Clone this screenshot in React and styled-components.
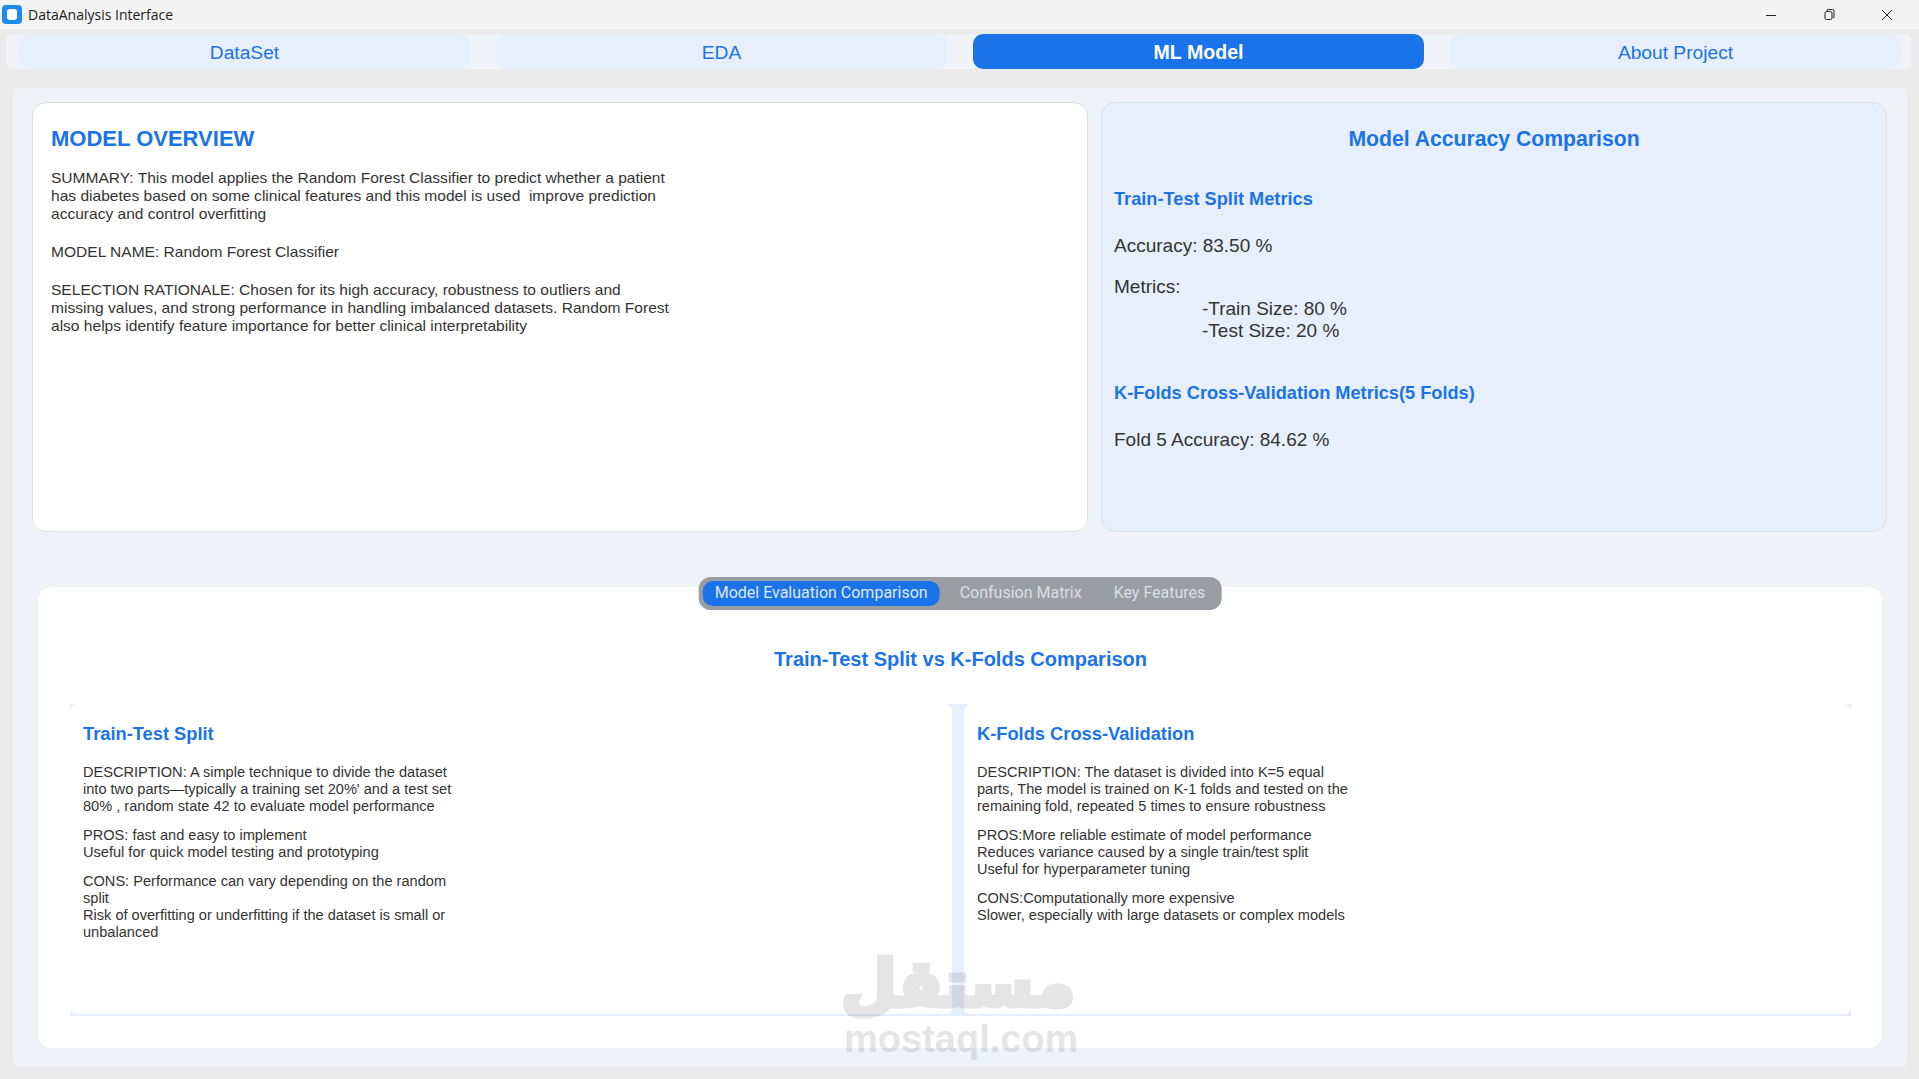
import styled, { createGlobalStyle } from 'styled-components';

const GlobalStyle = createGlobalStyle`
  html, body { margin: 0; padding: 0; background: #ebebeb; }
  body { font-family: "Liberation Sans", Arial, sans-serif; overflow: hidden; }
`;

const blue = '#1a73e8';

const Window = styled.div`
  position: relative;
  width: 1919px;
  height: 1079px;
  overflow: hidden;
`;

const TitleBar = styled.div`
  height: 29px;
  background: #f3f3f3;
  display: flex;
  align-items: center;
  padding-left: 2px;
`;

const AppIcon = styled.div`
  width: 20px;
  height: 19px;
  box-sizing: border-box;
  border-radius: 4px;
  background: #1f8af0;
  padding: 4px 5px;
  margin-right: 6px;
  &::after {
    content: '';
    display: block;
    height: 100%;
    border-radius: 3px;
    background: #fff;
  }
`;

const AppName = styled.span`
  font-family: "Open Sans", sans-serif;
  font-size: 14px;
  color: #1b1b1b;
`;

const WindowButtons = styled.div`
  margin-left: auto;
  display: flex;
  align-items: center;
  gap: 34px;
  padding-right: 20px;
  svg { display: block; width: 24px; height: 16px; }
`;

const TabStrip = styled.div`
  margin: 5px 8px 0 6px;
  height: 35px;
  padding: 0 10px 0 13px;
  background: #f0f3f8;
  border-radius: 6px;
  display: grid;
  grid-template-columns: repeat(4, 451px);
  gap: 26px;
`;

const Tab = styled.div`
  border-radius: 10px;
  display: flex;
  align-items: center;
  justify-content: center;
  padding-top: 2px;
  box-sizing: border-box;
  font-size: ${p => (p.$active ? '19.6px' : '19.2px')};
  font-weight: ${p => (p.$active ? 700 : 400)};
  color: ${p => (p.$active ? '#fff' : blue)};
  background: ${p => (p.$active ? blue : '#e8effc')};
`;

const Main = styled.div`
  margin: 19px 12px 0 13px;
  height: 979px;
  box-sizing: border-box;
  padding: 14px 20px 0 19px;
  background: #eff2f7;
  border-radius: 6px;
`;

const TopRow = styled.div`
  display: grid;
  grid-template-columns: 1056px 786px;
  gap: 13px;
  height: 430px;
`;

const Card = styled.div`
  box-sizing: border-box;
  border: 1px solid #dcdfe3;
  border-radius: 14px;
  background: ${p => (p.$tint ? '#e8effc' : '#fff')};
  padding: ${p => (p.$tint ? '22px 12px' : '22px 18px')};
`;

const OverviewTitle = styled.h1`
  margin: 0 0 16px;
  font-size: 22px;
  line-height: 28px;
  font-weight: 700;
  color: ${blue};
`;

const AccuracyTitle = styled.h1`
  margin: 0;
  font-size: 21.2px;
  line-height: 28px;
  font-weight: 700;
  text-align: center;
  color: ${blue};
`;

const OverviewText = styled.p`
  margin: 0 0 20px;
  font-size: 15.55px;
  line-height: 18px;
  color: #333;
  white-space: pre;
`;

const MetricHeading = styled.h2`
  margin: ${p => p.$top}px 0 0;
  font-size: 18.2px;
  line-height: 22px;
  font-weight: 700;
  color: ${blue};
`;

const MetricText = styled.p`
  margin: ${p => p.$top}px 0 0;
  font-size: 19px;
  line-height: 22px;
  color: #333;
  padding-left: ${p => p.$indent || 0}px;
`;

const BottomCard = styled.div`
  position: relative;
  margin: 55px 5px 0 6px;
  height: 461px;
  box-sizing: border-box;
  padding: 58px 31px 32px 32px;
  border-radius: 14px;
  background: #fff;
`;

const SubTabs = styled.div`
  position: absolute;
  top: -10px;
  left: 50%;
  transform: translateX(-50%);
  height: 33px;
  box-sizing: border-box;
  padding: 4px;
  border-radius: 12px;
  background: #9a9da2;
  display: flex;
  align-items: stretch;
  gap: 8px;
`;

const SubTab = styled.div`
  display: flex;
  align-items: center;
  padding: 0 12px 2px;
  border-radius: 10px;
  font-family: Roboto, sans-serif;
  font-size: 16px;
  white-space: nowrap;
  color: ${p => (p.$active ? '#dfe8fb' : '#dcdee2')};
  background: ${p => (p.$active ? blue : 'transparent')};
`;

const CompareTitle = styled.h2`
  margin: 0;
  font-size: 20px;
  line-height: 28px;
  font-weight: 700;
  text-align: center;
  color: ${blue};
`;

const CompareFrame = styled.div`
  margin-top: 31px;
  height: 312px;
  box-sizing: border-box;
  padding-bottom: 2px;
  background: #e8effc;
  display: grid;
  grid-template-columns: 882px 1fr;
  gap: 12px;
`;

const ComparePane = styled.div`
  background: #fff;
  border-radius: 7px;
  padding: 19px 13px 0;
`;

const PaneTitle = styled.h3`
  margin: 0 0 19px;
  font-size: 18.3px;
  line-height: 22px;
  font-weight: 700;
  color: ${blue};
`;

const PaneText = styled.p`
  margin: 0 0 12px;
  font-size: 14.58px;
  line-height: 17px;
  color: #333;
  white-space: pre;
`;

const Watermark = styled.div`
  position: absolute;
  left: 841px;
  top: 950px;
  width: 233px;
  text-align: center;
  color: #222;
  opacity: 0.11;
  font-weight: 700;
  pointer-events: none;
`;

const WatermarkArabic = styled.div`
  font-family: "DejaVu Sans", sans-serif;
  font-size: 64px;
  line-height: 69px;
  -webkit-text-stroke: 5px #222;
`;

const WatermarkLatin = styled.div`
  font-family: "Liberation Sans", sans-serif;
  font-size: 38px;
  line-height: 40px;
  padding-left: 3px;
`;

const tabs = ['DataSet', 'EDA', 'ML Model', 'About Project'];

export default function App() {
  return (
    <Window>
      <GlobalStyle />
      <TitleBar>
        <AppIcon />
        <AppName>DataAnalysis Interface</AppName>
        <WindowButtons>
          <svg viewBox="0 0 24 16" fill="none" stroke="#222" strokeWidth="1">
            <path d="M7 8.5h10" />
          </svg>
          <svg viewBox="0 0 24 16" fill="none" stroke="#222" strokeWidth="1">
            <rect x="8" y="4.5" width="7" height="8" rx="1.5" />
            <path d="M10 4.5V3.5a1 1 0 0 1 1-1h4.5a1.5 1.5 0 0 1 1.5 1.5v6a1 1 0 0 1-1 1" />
          </svg>
          <svg viewBox="0 0 24 16" fill="none" stroke="#222" strokeWidth="1">
            <path d="M7 3l10 10M17 3L7 13" />
          </svg>
        </WindowButtons>
      </TitleBar>

      <TabStrip>
        {tabs.map(t => (
          <Tab key={t} $active={t === 'ML Model'}>{t}</Tab>
        ))}
      </TabStrip>

      <Main>
        <TopRow>
          <Card>
            <OverviewTitle>MODEL OVERVIEW</OverviewTitle>
            <OverviewText>{`SUMMARY: This model applies the Random Forest Classifier to predict whether a patient
has diabetes based on some clinical features and this model is used  improve prediction
accuracy and control overfitting`}</OverviewText>
            <OverviewText>MODEL NAME: Random Forest Classifier</OverviewText>
            <OverviewText>{`SELECTION RATIONALE: Chosen for its high accuracy, robustness to outliers and
missing values, and strong performance in handling imbalanced datasets. Random Forest
also helps identify feature importance for better clinical interpretability`}</OverviewText>
          </Card>
          <Card $tint>
            <AccuracyTitle>Model Accuracy Comparison</AccuracyTitle>
            <MetricHeading $top={35}>Train-Test Split Metrics</MetricHeading>
            <MetricText $top={25}>Accuracy: 83.50 %</MetricText>
            <MetricText $top={19}>Metrics:</MetricText>
            <MetricText $top={0} $indent={88}>-Train Size: 80 %</MetricText>
            <MetricText $top={0} $indent={88}>-Test Size: 20 %</MetricText>
            <MetricHeading $top={40}>K-Folds Cross-Validation Metrics(5 Folds)</MetricHeading>
            <MetricText $top={25}>Fold 5 Accuracy: 84.62 %</MetricText>
          </Card>
        </TopRow>

        <BottomCard>
          <SubTabs>
            <SubTab $active>Model Evaluation Comparison</SubTab>
            <SubTab>Confusion Matrix</SubTab>
            <SubTab>Key Features</SubTab>
          </SubTabs>
          <CompareTitle>Train-Test Split vs K-Folds Comparison</CompareTitle>
          <CompareFrame>
            <ComparePane>
              <PaneTitle>Train-Test Split</PaneTitle>
              <PaneText>{`DESCRIPTION: A simple technique to divide the dataset
into two parts—typically a training set 20%' and a test set
80% , random state 42 to evaluate model performance`}</PaneText>
              <PaneText>{`PROS: fast and easy to implement
Useful for quick model testing and prototyping`}</PaneText>
              <PaneText>{`CONS: Performance can vary depending on the random
split
Risk of overfitting or underfitting if the dataset is small or
unbalanced`}</PaneText>
            </ComparePane>
            <ComparePane>
              <PaneTitle>K-Folds Cross-Validation</PaneTitle>
              <PaneText>{`DESCRIPTION: The dataset is divided into K=5 equal
parts, The model is trained on K-1 folds and tested on the
remaining fold, repeated 5 times to ensure robustness`}</PaneText>
              <PaneText>{`PROS:More reliable estimate of model performance
Reduces variance caused by a single train/test split
Useful for hyperparameter tuning`}</PaneText>
              <PaneText>{`CONS:Computationally more expensive
Slower, especially with large datasets or complex models`}</PaneText>
            </ComparePane>
          </CompareFrame>
        </BottomCard>
      </Main>

      <Watermark>
        <WatermarkArabic>مستقل</WatermarkArabic>
        <WatermarkLatin>mostaql.com</WatermarkLatin>
      </Watermark>
    </Window>
  );
}
